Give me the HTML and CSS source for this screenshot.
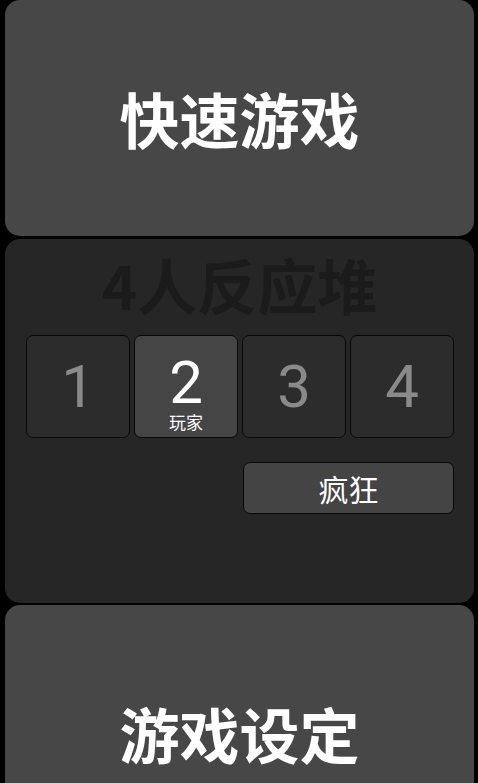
FILE: index.html
```html
<!DOCTYPE html>
<html lang="zh-CN">
<head>
<meta charset="utf-8">
<title>4人反应堆</title>
<link rel="stylesheet" href="styles.css">
</head>
<body>
<div class="screen">
  <div class="card card-light card-quick">
    <div class="big-title">快速游戏</div>
  </div>
  <div class="card card-dark">
    <div class="game-title">4人反应堆</div>
    <div class="players">
      <div class="pbox"><span class="num">1</span></div>
      <div class="pbox selected"><span class="num">2</span><span class="plabel">玩家</span></div>
      <div class="pbox"><span class="num">3</span></div>
      <div class="pbox"><span class="num">4</span></div>
    </div>
    <div class="mode-row">
      <div class="mode-btn">疯狂</div>
    </div>
  </div>
  <div class="card card-light card-settings">
    <div class="big-title">游戏设定</div>
  </div>
</div>
</body>
</html>
```
FILE: styles.css
```css
html, body {
  margin: 0;
  padding: 0;
  background: #000;
  overflow: hidden;
}
body {
  font-family: "Noto Sans CJK SC", "Noto Sans", sans-serif;
  width: 478px;
  height: 783px;
}
.screen {
  display: flex;
  flex-direction: column;
  padding: 0 4px 0 5px;
}
.card {
  border-radius: 15px;
  box-sizing: border-box;
}
.card-light {
  background: #474747;
  display: flex;
  align-items: center;
  justify-content: center;
}
.card-quick {
  height: 236px;
}
.card-settings {
  margin-top: 2px;
  height: 255px;
}
.big-title {
  color: #fff;
  font-size: 60px;
  font-weight: 700;
  line-height: 60px;
}
.card-dark {
  margin-top: 3px;
  height: 364px;
  background: #262626;
  padding: 15px 20px 0 21px;
  display: flex;
  flex-direction: column;
}
.game-title {
  color: #1b1b1b;
  font-size: 60px;
  font-weight: 700;
  line-height: 60px;
  text-align: center;
  padding-right: 1px;
}
.players {
  margin-top: 21px;
  display: grid;
  grid-template-columns: repeat(4, 104px);
  gap: 4px;
}
.pbox {
  height: 103px;
  box-sizing: border-box;
  border: 1px solid #080808;
  border-radius: 7px;
  background: #2c2c2c;
  display: flex;
  flex-direction: column;
  align-items: center;
  justify-content: center;
}
.num {
  font-family: Roboto, "Noto Sans", sans-serif;
  font-size: 60px;
  line-height: 58px;
  color: #8a8a8a;
}
.pbox.selected {
  background: #454545;
  justify-content: flex-start;
  padding-top: 23px;
}
.pbox.selected .num {
  color: #fff;
  line-height: 48px;
}
.plabel {
  color: #fff;
  font-size: 17px;
  line-height: 18px;
  margin-top: 6px;
}
.mode-row {
  margin-top: 24px;
  display: flex;
  justify-content: flex-end;
}
.mode-btn {
  width: 211px;
  height: 52px;
  box-sizing: border-box;
  border: 1px solid #080808;
  border-radius: 7px;
  background: #444;
  color: #fff;
  font-size: 30px;
  line-height: 50px;
  text-align: center;
}
```
